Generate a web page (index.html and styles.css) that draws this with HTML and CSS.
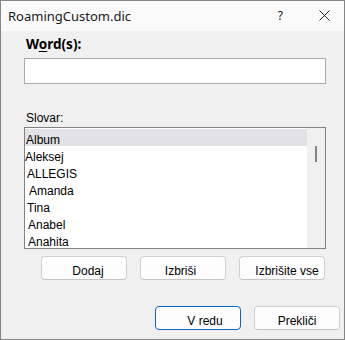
FILE: index.html
```html
<!DOCTYPE html>
<html>
<head>
<meta charset="utf-8">
<link rel="stylesheet" href="styles.css">
</head>
<body>
<div class="window">
  <div class="titlebar">
    <span class="title">RoamingCustom.dic</span>
    <span class="help">?</span>
    <svg class="close" width="11" height="11" viewBox="0 0 11 11"><path d="M0.5 0.5 L10.5 10.5 M10.5 0.5 L0.5 10.5" stroke="#222" stroke-width="1" fill="none"/></svg>
  </div>
  <div class="content">
    <div class="word-label">W<u>o</u>rd(s):</div>
    <div class="input"></div>
    <div class="dict-label">Slovar:</div>
    <div class="listbox">
      <div class="rows">
        <div class="row selected"><span class="t1">Album</span></div>
        <div class="row"><span class="t0">Aleksej</span></div>
        <div class="row"><span class="t2">ALLEGIS</span></div>
        <div class="row"><span class="t4">Amanda</span></div>
        <div class="row"><span class="t2">Tina</span></div>
        <div class="row"><span class="t3">Anabel</span></div>
        <div class="row"><span class="t3">Anahita</span></div>
      </div>
      <div class="scrollbar"><div class="thumb"></div></div>
    </div>
    <div class="btnrow1">
      <div class="btn b-dodaj">Dodaj</div>
      <div class="btn b-izbrisi">Izbriši</div>
      <div class="btn b-vse">Izbrišite vse</div>
    </div>
    <div class="btnrow2">
      <div class="btn primary b-ok">V redu</div>
      <div class="btn b-cancel">Prekliči</div>
    </div>
  </div>
</div>
</body>
</html>
```
FILE: styles.css
```css
html, body {
  margin: 0;
  padding: 0;
  background: #f0f0f0;
}
.window {
  width: 345px;
  height: 340px;
  box-sizing: border-box;
  border: 1px solid #858585;
  background: #f0f0f0;
  overflow: hidden;
}
.titlebar {
  height: 30px;
  background: #fafafa;
  display: flex;
  align-items: center;
  font-family: "Noto Sans", sans-serif;
  font-size: 13px;
  color: #1a1a1a;
}
.title {
  margin-left: 7px;
  line-height: 30px;
}
.help {
  margin-left: auto;
  margin-right: 36px;
  font-size: 12px;
  line-height: 30px;
}
.close {
  margin-right: 14px;
  margin-top: -1px;
}
.content {
  padding-left: 23px;
}
.word-label {
  margin-top: 5px;
  height: 16px;
  line-height: 16px;
  padding-left: 2px;
  font-family: "Noto Sans", sans-serif;
  font-weight: bold;
  font-size: 13.5px;
  color: #000;
}
.word-label u {
  text-decoration-thickness: 1px;
  text-underline-offset: 2px;
}
.input {
  margin-top: 6px;
  width: 302px;
  height: 26px;
  box-sizing: border-box;
  border: 1px solid #ababab;
  background: #fff;
}
.dict-label {
  margin-top: 27px;
  height: 14px;
  line-height: 14px;
  padding-left: 2px;
  font-family: "Liberation Sans", Arial, sans-serif;
  font-size: 12px;
  color: #000;
}
.listbox {
  margin-top: 2px;
  width: 302px;
  height: 122px;
  box-sizing: border-box;
  border: 1px solid #828282;
  background: #fff;
  display: flex;
  overflow: hidden;
}
.rows {
  width: 282px;
  padding-top: 1px;
}
.row {
  height: 17px;
  box-sizing: border-box;
  padding-top: 5px;
  line-height: 12px;
  font-family: "Liberation Sans", Arial, sans-serif;
  font-size: 12px;
  color: #000;
  white-space: nowrap;
}
.row.selected {
  background: #e1e1e6;
}
.t0 { padding-left: 0; }
.t1 { padding-left: 1px; }
.t2 { padding-left: 2px; }
.t3 { padding-left: 3px; }
.t4 { padding-left: 4px; }
.scrollbar {
  width: 18px;
  background: #f0f0f0;
  padding-top: 18px;
  padding-left: 8px;
  box-sizing: border-box;
}
.thumb {
  width: 2px;
  height: 16px;
  background: #868686;
}
.btnrow1 {
  margin-top: 7px;
  display: flex;
  justify-content: flex-end;
  gap: 13px;
  width: 301px;
}
.btnrow2 {
  margin-top: 26px;
  display: flex;
  justify-content: flex-end;
  gap: 13px;
  width: 316px;
}
.btn {
  width: 86px;
  height: 24px;
  box-sizing: border-box;
  border: 1px solid #d0d0d0;
  border-bottom-color: #c4c4c4;
  border-radius: 4px;
  background: #fdfdfd;
  padding-top: 5px;
  line-height: 18px;
  text-align: center;
  font-family: "Liberation Sans", Arial, sans-serif;
  font-size: 12px;
  color: #000;
  white-space: nowrap;
}
.btn.primary {
  border: 1px solid #0a64c2;
}
.b-dodaj { padding-left: 8px; }
.b-izbrisi { padding-right: 5px; }
.b-vse { padding-left: 10px; }
.b-ok { padding-left: 14px; }
```
